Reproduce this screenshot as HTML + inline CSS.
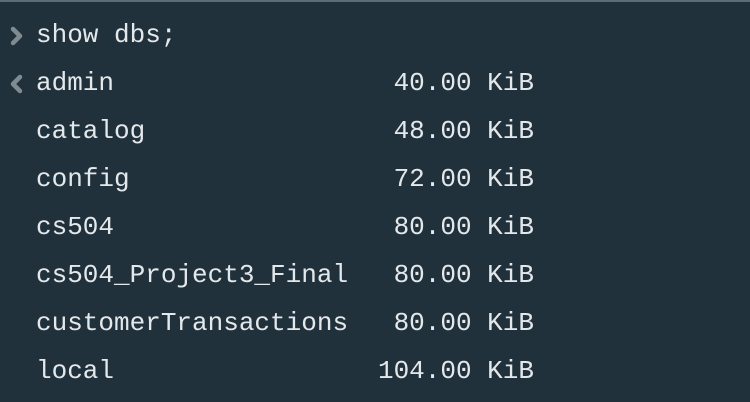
<!DOCTYPE html>
<html><head><style>
body{margin:0;width:750px;height:402px;background:#21313c;overflow:hidden;position:relative;font-family:"Liberation Mono",monospace;font-size:26px;color:#e3e8eb}
.top{position:absolute;left:0;top:0;width:750px;height:2px;background:#5d6c74}
.r{position:absolute;left:36px;height:30px;line-height:30px;white-space:pre}
.v{position:absolute;right:216px;height:30px;line-height:30px;white-space:pre}
svg{position:absolute;left:8px}
</style></head><body>
<div class="top"></div>
<svg style="top:25px" width="18" height="22" viewBox="0 0 18 22"><path d="M5 4 L12 11 L5 18" fill="none" stroke="#7f8b91" stroke-width="4.5" stroke-linecap="round" stroke-linejoin="round"/></svg>
<svg style="top:73px" width="18" height="22" viewBox="0 0 18 22"><path d="M12 4 L5 11 L12 18" fill="none" stroke="#7f8b91" stroke-width="4.5" stroke-linecap="round" stroke-linejoin="round"/></svg>
<div class="r" style="top:20px">show dbs;</div>
<div class="r" style="top:68px">admin</div><div class="v" style="top:68px">40.00 KiB</div>
<div class="r" style="top:116px">catalog</div><div class="v" style="top:116px">48.00 KiB</div>
<div class="r" style="top:164px">config</div><div class="v" style="top:164px">72.00 KiB</div>
<div class="r" style="top:212px">cs504</div><div class="v" style="top:212px">80.00 KiB</div>
<div class="r" style="top:260px">cs504_Project3_Final</div><div class="v" style="top:260px">80.00 KiB</div>
<div class="r" style="top:308px">customerTransactions</div><div class="v" style="top:308px">80.00 KiB</div>
<div class="r" style="top:356px">local</div><div class="v" style="top:356px">104.00 KiB</div>
</body></html>
